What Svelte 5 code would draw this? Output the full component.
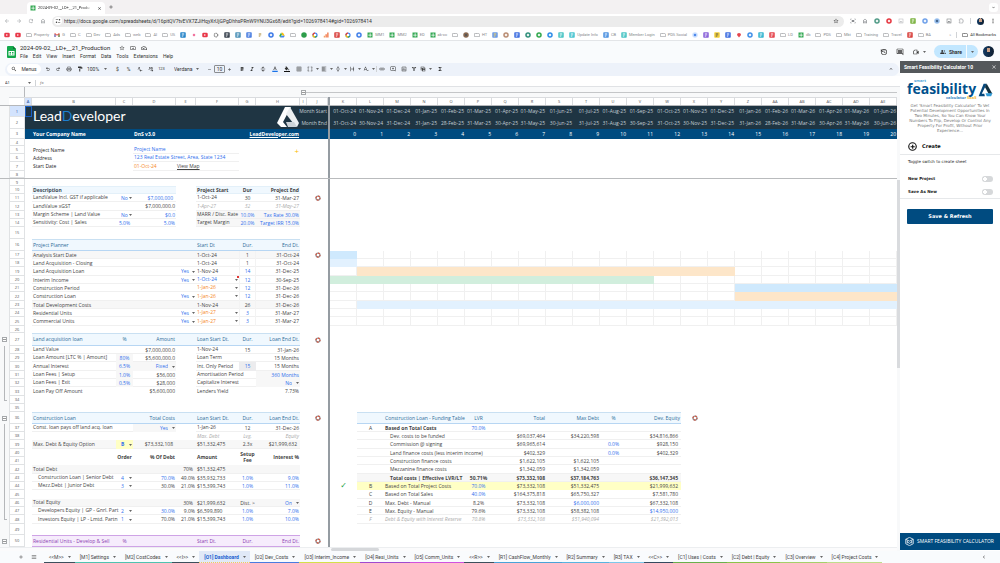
<script>
	const icons = {
		back: '<path d="M20 11H7.8l5.6-5.6L12 4l-8 8 8 8 1.4-1.4L7.8 13H20z"/>',
		forward: '<path d="M4 11h12.2l-5.6-5.6L12 4l8 8-8 8-1.4-1.4 5.6-5.6H4z"/>',
		reload: '<path d="M17.6 6.4A8 8 0 1 0 19.7 14h-2.1A6 6 0 1 1 16.2 7.8L13 11h7V4z"/>',
		home: '<path d="M12 5.5l5 4.5v9h-2v-6H9v6H7v-9zM12 3l-8 7v11h7v-6h2v6h7V10z"/>',
		tune: '<path d="M3 6h9v2H3zM18 4a3 3 0 1 0 0 6 3 3 0 0 0 0-6zM12 16h9v2h-9zM6 14a3 3 0 1 0 0 6 3 3 0 0 0 0-6z"/>',
		star: '<path d="M22 9.2l-7.2-.6L12 2 9.2 8.6 2 9.2l5.5 4.8L5.8 21 12 17.3l6.2 3.7-1.6-7zM12 15.4l-3.8 2.3 1-4.3L6 10.6l4.3-.4L12 6.1l1.7 4.1 4.3.4-3.3 2.8 1 4.3z"/>',
		folder: '<path d="M9.2 6l2 2H20v10H4V6zM10 4H4a2 2 0 0 0-2 2v12a2 2 0 0 0 2 2h16a2 2 0 0 0 2-2V8a2 2 0 0 0-2-2h-8z"/>',
		moveTo: '<path d="M9.2 6l2 2H20v10H4V6zM10 4H4a2 2 0 0 0-2 2v12a2 2 0 0 0 2 2h16a2 2 0 0 0 2-2V8a2 2 0 0 0-2-2h-8zM12 10l4 3-4 3v-2H8v-2h4z"/>',
		cloud: '<path d="M19.3 10A7.5 7.5 0 0 0 5.4 8 6 6 0 0 0 6 20h13a5 5 0 0 0 .3-10zM19 18H6a4 4 0 0 1-.4-8l1-.1.5-1a5.5 5.5 0 0 1 10.3 1.5l.3 1.5 1.5.1A3 3 0 0 1 19 18zM10 14.2l-2-2L6.6 13.6 10 17l6-6-1.4-1.4z"/>',
		search: '<path d="M15.5 14h-.8l-.3-.3A6.5 6.5 0 1 0 13.7 14.4l.3.3v.8l5 5 1.5-1.5zM9.5 14a4.5 4.5 0 1 1 0-9 4.5 4.5 0 0 1 0 9z"/>',
		undo: '<path d="M7 19v-2h7.1a3.9 3.9 0 0 0 0-7.5H7.8l2.6 2.6L9 13.5 4 8.5l5-5 1.4 1.4L7.8 7.5h6.3a5.9 5.9 0 0 1 0 11.5z"/>',
		redo: '<path d="M17 19v-2H9.9a3.9 3.9 0 0 1 0-7.5h6.3l-2.6 2.6 1.4 1.4 5-5-5-5-1.4 1.4 2.6 2.6H9.9a5.9 5.9 0 0 0 0 11.5z"/>',
		print: '<path d="M19 8h-1V3H6v5H5a3 3 0 0 0-3 3v6h4v4h12v-4h4v-6a3 3 0 0 0-3-3zM8 5h8v3H8zm8 14H8v-4h8zm4-4h-2v-2H6v2H4v-4l1-1h14l1 1z"/>',
		paint: '<path d="M18 4V3a1 1 0 0 0-1-1H5a1 1 0 0 0-1 1v4a1 1 0 0 0 1 1h12a1 1 0 0 0 1-1V6h1v4H9v11a1 1 0 0 0 1 1h2a1 1 0 0 0 1-1v-9h8V4z"/>',
		dec: '<path d="M3 12h2v2H3zM9 4a3 3 0 0 0-3 3v4a3 3 0 0 0 6 0V7a3 3 0 0 0-3-3zm1 7a1 1 0 0 1-2 0V7a1 1 0 0 1 2 0zM21 17h-7l2-2-1.4-1.4L10 18l4.6 4.4L16 21l-2-2h7z"/>',
		inc: '<path d="M1 12h2v2H1zM7 4a3 3 0 0 0-3 3v4a3 3 0 0 0 6 0V7a3 3 0 0 0-3-3zm1 7a1 1 0 0 1-2 0V7a1 1 0 0 1 2 0zM15 4a3 3 0 0 0-3 3v4a3 3 0 0 0 6 0V7a3 3 0 0 0-3-3zm1 7a1 1 0 0 1-2 0V7a1 1 0 0 1 2 0zM10 17h7l-2-2 1.4-1.4L21 18l-4.6 4.4L15 21l2-2h-7z"/>',
		bold: '<path d="M15.6 11.8A4 4 0 0 0 13.5 4H7v16h7.2a4.4 4.4 0 0 0 1.4-8.2zM10 6.5h3a1.5 1.5 0 0 1 0 3.5h-3zm3.5 11H10V13.5h3.5a1.5 1.5 0 0 1 0 4z"/>',
		italic: '<path d="M10 4v3h2.2l-3.4 10H6v3h8v-3h-2.2l3.4-10H18V4z"/>',
		strike: '<path d="M3 11h18v2H3zM12 3c3 0 5 2 5 4h-3c0-1-1-1.5-2-1.5-3 0-3 3 0 3.5H8C6 6 8 3 12 3zM7 16h3c0 1.5 1 2.5 2.5 2.5 2 0 2.5-1.5 1.5-3h3c1 3-1 5.5-4.5 5.5C9 21 7 19 7 16z"/>',
		color: '<path d="M11 2L5.5 16h2.2l1.1-3h6.3l1.1 3h2.3L13 2zM9.6 11L12 4.7 14.4 11z"/><path d="M1 19h22v5H1z" fill="#1a73e8"/>',
		fill: '<path d="M16.6 9L7.6 0 6.2 1.4l2.4 2.4-5.2 5.2a1.5 1.5 0 0 0 0 2.1l5.5 5.5a1.5 1.5 0 0 0 2.1 0L16.6 11a1.5 1.5 0 0 0 0-2zM19 11.5s-2 2.2-2 3.5a2 2 0 0 0 4 0c0-1.3-2-3.5-2-3.5z"/><path d="M0 20h24v4H0z" fill="#111"/>',
		border: '<path d="M3 3v18h18V3zm8 16H5v-6h6zm0-8H5V5h6zm8 8h-6v-6h6zm0-8h-6V5h6z"/>',
		merge: '<path d="M3 3h6v2H5v4H3zM21 3h-6v2h4v4h2zM3 21h6v-2H5v-4H3zM21 21h-6v-2h4v-4h2zM3 11h5v2H3zM16 11h5v2h-5z"/>',
		align: '<path d="M3 3h18v2H3zM3 7h12v2H3zM3 11h18v2H3zM3 15h12v2H3zM3 19h18v2H3z"/>',
		valign: '<path d="M8 19h3v4h2v-4h3l-4-4zM16 5h-3V1h-2v4H8l4 4zM4 11v2h16v-2z"/>',
		wrap: '<path d="M4 3h2v18H4zM18 3h2v6h-2zM18 15h2v6h-2zM8 11h8V8l5 4-5 4v-3H8z"/>',
		rotate: '<path d="M3 18l6-15h2l6 15h-2.2l-1.5-4H6.7l-1.5 4zM7.4 12h5.2L10 5zM16 20l5-5v5z"/>',
		link: '<path d="M3.9 12A3.1 3.1 0 0 1 7 8.9h4V7H7a5 5 0 0 0 0 10h4v-1.9H7A3.1 3.1 0 0 1 3.9 12zM8 13h8v-2H8zM17 7h-4v1.9h4a3.1 3.1 0 0 1 0 6.2h-4V17h4a5 5 0 0 0 0-10z"/>',
		addComment: '<path d="M22 4a2 2 0 0 0-2-2H4a2 2 0 0 0-2 2v12a2 2 0 0 0 2 2h14l4 4zM20 17l-1-1H4V4h16zM11 14h2v-3h3V9h-3V6h-2v3H8v2h3z"/>',
		comment: '<path d="M22 4a2 2 0 0 0-2-2H4a2 2 0 0 0-2 2v12a2 2 0 0 0 2 2h14l4 4zM20 17l-1-1H4V4h16zM6 12h12v2H6zM6 9h12v2H6zM6 6h12v2H6z"/>',
		chart: '<path d="M19 3H5a2 2 0 0 0-2 2v14a2 2 0 0 0 2 2h14a2 2 0 0 0 2-2V5a2 2 0 0 0-2-2zm0 16H5V5h14zM7 10h2v7H7zM11 7h2v10h-2zM15 13h2v4h-2z"/>',
		filter: '<path d="M3 4h18l-7 9v7h-4v-7zm4.5 2L12 12l4.5-6z"/>',
		views: '<path d="M3 3h14v4h4v14H8v-4H3zm2 2v3h10V5zm0 5v5h3v-5zm6 2h8v-2h-8zm0 3v4h8v-4z"/>',
		sigma: '<path d="M18 4H6v2l6.5 6L6 18v2h12v-3h-7l5-5-5-5h7z"/>',
		up: '<path d="M12 8l-6 6 1.4 1.4L12 10.8l4.6 4.6L18 14z"/>',
		down: '<path d="M7.4 8.6L12 13.2l4.6-4.6L18 10l-6 6-6-6z"/>',
		left: '<path d="M15.4 7.4L14 6l-6 6 6 6 1.4-1.4L10.8 12z"/>',
		close: '<path d="M19 6.4L17.6 5 12 10.6 6.4 5 5 6.4 10.6 12 5 17.6 6.4 19 12 13.4 17.6 19 19 17.6 13.4 12z"/>',
		plus: '<path d="M19 13h-6v6h-2v-6H5v-2h6V5h2v6h6z"/>',
		minus: '<path d="M5 11h14v2H5z"/>',
		menu: '<path d="M3 18h18v-2H3zM3 13h18v-2H3zM3 6v2h18V6z"/>',
		history: '<path d="M12 3a9 9 0 0 0-7.5 4V4h-2v7h7V9H5.8A7 7 0 1 1 5 12H3a9 9 0 1 0 9-9zM11 7v6l5 3 1-1.6-4-2.4V7z"/>',
		video: '<path d="M8 5L4 9v10h12v-4l4 3V8l-4 3V5zm1 2h5v10H6V10z"/>',
		people: '<path d="M9 12a4 4 0 1 0 0-8 4 4 0 0 0 0 8zM1 20v-3c0-3 5-4 8-4s8 1 8 4v3zM15 4a4 4 0 0 1 0 8c2-2 2-6 0-8zM18 14c2 .5 5 1 5 3v3h-4v-3z"/>',
		puzzle: '<path d="M10 4a2 2 0 0 1 4 0v1h5v5h1a2 2 0 0 1 0 4h-1v6H5v-5h1a2 2 0 0 0 0-5H5V5h5z" fill="none" stroke="currentColor" stroke-width="2"/>',
		dots: '<path d="M10 3h4v4h-4zM10 10h4v4h-4zM10 17h4v4h-4z"/>',
		frame: '<path d="M2 3h5v2H4v3H2zM22 3h-5v2h3v3h2zM2 21h5v-2H4v-3H2zM22 21h-5v-2h3v-3h2zM7 8h10v8H7z"/>',
		image: '<path d="M3 3h18v18H3zm2 2v14h14V5zm1 12l4-5 3 3 2-3 3 5z"/>',
		sheet: '<path d="M2 2h20v20H2z" fill="#34a853"/><path d="M11 5h3v6h5v3h-5v5h-3v-5H5v-3h6z" fill="#fff"/>',
		yt: '<rect x="1" y="3" width="22" height="18" rx="5" fill="#e8394a"/><path d="M9 8l7 4-7 4z" fill="#fff"/>',
		gmail: '<path d="M2 5v15h4V10l6 5 6-5v10h4V5h-3l-7 6-7-6z" fill="#ea4335"/><path d="M2 9v11h4V10z" fill="#4285f4"/><path d="M22 9v11h-4V10z" fill="#34a853"/>',
		drive: '<path d="M8 3h8l7 12h-8z" fill="#fbbc04"/><path d="M8 3l4 7-7 12-4-7z" fill="#34a853"/><path d="M9 15h14l-4 7H5z" fill="#4285f4"/>',
		google: '<circle cx="12" cy="12" r="8" fill="none" stroke="#4285f4" stroke-width="5"/><path d="M4 12a8 8 0 0 1 8-8" fill="none" stroke="#ea4335" stroke-width="5"/><path d="M4 12a8 8 0 0 0 8 8" fill="none" stroke="#fbbc04" stroke-width="5"/><path d="M12 20a8 8 0 0 0 7-4" fill="none" stroke="#34a853" stroke-width="5"/>',
		bars: '<path d="M3 15h5v7H3z" fill="#f4a261"/><path d="M10 9h5v13h-5zM17 2h5v20h-5z" fill="#ef6c3a"/>',
		pin: '<path d="M12 22L4 12a8 8 0 1 1 16 0z" fill="#e5454d"/>',
		gear: '<circle cx="12" cy="12" r="7" fill="none" stroke="#888" stroke-width="5" stroke-dasharray="5 2"/>',
	};

	const square = (bg, mark = '#fff') =>
		`<rect x="1" y="1" width="22" height="22" rx="3" fill="${bg}"/><path d="M7 6h10v3H7zM7 11h10v2H7zM7 15h6v3H7z" fill="${mark}"/>`;
	const round = (bg, mark = '#fff') =>
		`<circle cx="12" cy="12" r="11" fill="${bg}"/><path d="M12 6l6 6-6 6-6-6z" fill="${mark}"/>`;

	const bookmarks = [
		[icons.yt], [icons.yt], ['folder', 'Property'], [icons.gmail, 'G'], ['folder', 'C'], ['folder', 'Dev'],
		['folder', 'Ads'], ['folder', 'web'], ['folder', 'AI'], ['folder', 'US'], [square('#2684c8')],
		[round('#fff', '#f06292')], [icons.yt], [icons.gear], [square('#39424e')], [square('#4f93b8')],
		[square('#4c7fe0')], [square('#fff', '#a8842c')], [round('#3b78e7')], [icons.drive], ['folder'],
		[round('#2e9e4b', '#2e9e4b')], [icons.google], [icons.bars], [square('#d9433f')], [icons.google],
		[round('#3f7ee8')], [icons.sheet, 'MM1'], [icons.sheet, 'MM2'], [icons.sheet, 'ED'],
		[icons.sheet, 'ak-cc'], ['folder'], [round('#8a6a52', '#555')], ['folder', 'HT'], [square('#6c9be8', '#fbd75b')],
		[round('#b98c72')], [square('#3f6fe0')], [round('#2f8f7a')], [round('#2fa74b')], [round('#2b8be8')],
		[square('#4cc5c5')], [square('#4cc5d0'), 'Update Info'], [square('#4f93e0'), 'CB'],
		[square('#4cc5c5'), 'Member Login'], ['folder', 'PDS Social'], [round('#cfe2ff', '#3f7ee8')],
		[square('#8a63d9')], [square('#f3cf3a', '#555')], [square('#3f6fe0')], [icons.pin], [round('#3f8fe8')],
		[square('#39b6d0')], [square('#e5454d')], ['folder', 'LD'], [icons.sheet, 'db'], ['folder', 'PDS'],
		['folder', 'Mkt'], ['folder', 'Training'], ['folder', 'Travel'], [square('#d9433f')], ['folder', 'BA'],
	];

	const extensions = [
		['frame', '#8a8d91'], ['home', '#8a8d91'], ['', round('#4f9a86')], ['', round('#e5343d')], ['image', '#b3b5b8'],
		['', square('#7cb342')], ['', round('#6ea0ea')], ['', round('#9cc2f0', '#3b5a80')], ['image', '#6a6d70'], ['puzzle', '#8a8d91'],
	];

	const menus = ['File', 'Edit', 'View', 'Insert', 'Format', 'Data', 'Tools', 'Extensions', 'Help'];

	// [icon, slot width, has caret]
	const historyTools = [['undo', 11], ['redo', 10], ['print', 11], ['paint', 11]];
	const formatTools = [
		['bold', 11], ['italic', 10], ['strike', 11], ['color', 13], ['fill', 12], ['border', 12],
		['merge', 15, true], ['align', 14, true], ['valign', 14, true], ['wrap', 14, true], ['rotate', 14, true],
	];
	const insertTools = [['link', 10], ['addComment', 11], ['chart', 11], ['filter', 10], ['views', 14, true], ['sigma', 14]];

	const sheets = [
		['<<M>>', '#3c4f5c'], ['[M1] Settings', '#4fc3b0'], ['[M2] CostCodes', '#4fc3b0'], ['<<I>>', '#3c4f5c'],
		['[O1] Dashboard', '#f4c95a'], ['[O2] Dev_Costs', '#4a7be0'], ['[O3] Interim_Income', '#d4e04a'],
		['[O4] Resi_Units', '#a04ad0'], ['[O5] Comm_Units', '#d052e0'], ['<<R>>', '#3c4f5c'],
		['[R1] CashFlow_Monthly', '#4aa3d8'], ['[R2] Summary', '#58b4e0'], ['[R3] TAX', '#7cc8ea'], ['<<C>>', '#34495e'],
		['[C1] Uses | Costs', '#6ab04c'], ['[C2] Debt | Equity', '#8bc34a'], ['[C3] Overview', '#a5d06a'],
		['[C4] Project Costs', '#bfdd8c'],
	];

	const MONTHS = 21;
	const leftCols = ['A', 'B', 'C', 'D', 'E', 'F', 'G', 'H', 'I', 'J'];
	const letters = [...'KLMNOPQRSTUVWXYZ', 'AA', 'AB', 'AC', 'AD', 'AE'];

	// grid lines: 1 is the gutter, 2 the row number, 13 the freeze bar
	const colIndex = name => {
		const i = leftCols.indexOf(name);
		return i >= 0 ? i + 3 : letters.indexOf(name) + 14;
	};
	const span = range => {
		const [a, b = a] = range.split(':');
		return `grid-column: ${colIndex(a)} / ${colIndex(b) + 1}`;
	};

	const names = ['Jan', 'Feb', 'Mar', 'Apr', 'May', 'Jun', 'Jul', 'Aug', 'Sep', 'Oct', 'Nov', 'Dec'];
	const monthDate = (i, end) => {
		const d = new Date(2024, 9 + i + (end ? 1 : 0), end ? 0 : 1);
		return `${String(d.getDate()).padStart(2, '0')}-${names[d.getMonth()]}-${String(d.getFullYear()).slice(2)}`;
	};
	const months = end => Array.from({ length: MONTHS }, (_, i) => [letters[i], monthDate(i, end), 'r pale']);

	const heights = [
		11, 12, 10, 7, 8, 8, 9, 8, 7, 8, 8, 9, 8, 8, 12, 12, 8, 8, 9, 8, 8, 9, 8, 8, 9,
		7, 13, 8, 8, 9, 8, 8, 9, 8, 8, 12, 8, 8, 9, 8, 8, 9, 8, 8, 9, 8, 8, 9, 11, 12,
	];

	const plan = (name, use, start, dur, end, look = '', bars = []) => [
		['B:H', '', look],
		['B:D', name],
		...(use ? [['E', use, 'pick blue']] : []),
		['F', start, look.includes('pk') ? 'pick ' + look : look.includes('blue') ? 'blue' : ''],
		['G', dur, +dur > 1 && !look.includes('grey') ? 'c blue vline' : 'c vline'],
		['H', end, 'r'],
		...letters.map(l => [l, '', 'slot']),
		...bars.map(([range, color]) => [range, '', 'bar ' + color]),
	];

	const fund = (key, label, lvr, total, debt, pct, equity, look = 'line') => [
		['L:W', '', look],
		['L', key, 'c'],
		['M:O', label, key ? '' : 'sub'],
		['P', lvr, look.includes('dim') || look.includes('strong') || look.includes('plainlvr') ? 'c' : 'c blue'],
		['Q:R', total, 'r'],
		['S:T', debt, debt === '$6,000,000' ? 'r blue' : 'r'],
		['U', pct, 'c blue'],
		['V:W', equity, equity === '$14,950,000' ? 'r far blue' : 'r far'],
	];

	const data = {
		1: { look: 'navy', cells: [['A', '', 'active'], ['B:E', '', 'brand'], ['H', '', 'emblem'], ['I:J', 'Month Start', 'r pale'], ...months(false)] },
		2: { look: 'navy', cells: [['I:J', 'Month End', 'r pale'], ...months(true)] },
		3: { look: 'royal', cells: [['B:C', 'Your Company Name', 'b'], ['D:E', 'DnS v3.0', 'b'], ['G:H', 'LeadDeveloper.com', 'r b link'], ...letters.map((l, i) => [l, String(i), 'r'])] },
		5: { cells: [['B', 'Project Name', 'ink'], ['D:F', 'Project Name', 'blue line'], ['H', '+', 'r gold']] },
		6: { cells: [['B', 'Address', 'ink'], ['D:F', '123 Real Estate Street, Area, State 1234', 'blue line']] },
		7: { cells: [['B', 'Start Date', 'ink'], ['D:F', '', 'line'], ['D', '01-Oct-24', 'orange'], ['E:F', 'View Map', 'under']] },
		8: { look: 'frozen', cells: [] },
		10: { cells: [['B:D', 'Description', 'head soft'], ['F:H', '', 'head soft'], ['F', 'Project Start', 'b'], ['G', 'Dur', 'c b'], ['H', 'Project End', 'r b']] },
		11: { cells: [['B:D', 'LandValue Incl. GST if applicable', 'line'], ['C', 'No', 'pick blue c'], ['D', '$7,000,000', 'r blue inset'], ['F:H', '1-Oct-24', 'line'], ['G', '30', 'c'], ['H', '31-Mar-27', 'r'], ['J', '', 'buoy']] },
		12: { cells: [['B:D', 'LandValue xGST', 'line'], ['D', '$7,000,000.0', 'r'], ['F:H', '1-Apr-27', 'line dim'], ['G', '32', 'c dim'], ['H', '31-May-27', 'r dim']] },
		13: { cells: [['B:D', 'Margin Scheme | Land Value', 'line'], ['C', 'No', 'pick blue c'], ['D', '$0.0', 'r blue'], ['F:H', 'MARR / Disc. Rate', 'line grey'], ['G', '10.0%', 'c blue'], ['H', 'Tax Rate 30.0%', 'r blue']] },
		14: { cells: [['B:D', 'Sensitivity: Cost | Sales', 'line'], ['C', '5.0%', 'c blue'], ['D', '5.0%', 'r blue'], ['F:H', 'Target Margin', 'line grey'], ['G', '20.0%', 'c blue'], ['H', 'Target IRR 15.0%', 'r blue']] },
		16: { cells: [['B:H', 'Project Planner', 'head'], ['F', 'Start Dt', 'teal'], ['G', 'Dur.', 'c teal'], ['H', 'End Dt.', 'r teal']] },
		17: { cells: [...plan('Analysis Start Date', '', '1-Oct-24', '1', '31-Oct-24', 'line grey', [['K', 'sky']]), ['J', '', 'buoy']] },
		18: { cells: plan('Land Acquisition - Closing', '', '1-Oct-24', '1', '31-Oct-24', 'line', [['K', 'ice']]) },
		19: { cells: plan('Land Acquisition Loan', 'Yes', '1-Nov-24', '14', '31-Dec-25', 'line', [['L:Y', 'peach']]) },
		20: { cells: [...plan('Interim Income', 'Yes', '1-Oct-24', '12', '30-Sep-25', 'line pk blue', [['K:V', 'mint']]), ['F', '', 'note']] },
		21: { cells: plan('Construction Period', '', '1-Jan-26', '12', '31-Dec-26', 'line pk orange', [['Z:AE', 'sky']]) },
		22: { cells: plan('Construction Loan', 'Yes', '1-Jan-26', '12', '31-Dec-26', 'line pk orange', [['Z:AE', 'peach']]) },
		23: { cells: plan('Total Development Costs', '', '1-Nov-24', '26', '31-Dec-26', 'line grey', [['L:AE', 'ice']]) },
		24: { cells: plan('Residential Units', 'Yes', '1-Jan-27', '3', '31-Mar-27', 'line pk orange') },
		25: { cells: plan('Commercial Units', 'Yes', '1-Jan-27', '3', '31-Mar-27', 'line pk orange') },
		27: { group: 'start', cells: [['B:H', 'Land acquisition loan', 'head'], ['C', '%', 'c teal'], ['D', 'Amount', 'r teal'], ['F', 'Loan Start Dt.', 'teal'], ['G', 'Dur.', 'c teal'], ['H', 'Loan End Dt.', 'r teal'], ['J', '', 'buoy']] },
		28: { group: 'mid', cells: [['B:D', 'Land Value', 'line'], ['D', '$7,000,000.0', 'r'], ['F:H', '1-Nov-24', 'line'], ['G', '15', 'c'], ['H', '31-Jan-26', 'r']] },
		29: { group: 'mid', cells: [['B:D', 'Loan Amount [LTC % | Amount]', 'line'], ['C', '80%', 'c blue grey'], ['D', '$5,600,000.0', 'r'], ['F:H', 'Loan Term', 'line'], ['H', '15 Months', 'r']] },
		30: { group: 'mid', cells: [['B:D', 'Annual Interest', 'line'], ['C', '6.5%', 'c blue grey'], ['D', 'Fixed', 'pick blue r grey'], ['F:H', 'Int. Only Period', 'line'], ['G', '15', 'c blue shade'], ['H', '15 Months', 'r']] },
		31: { group: 'mid', cells: [['B:D', 'Loan Fees | Setup', 'line'], ['C', '1.0%', 'c blue grey'], ['D', '$56,000', 'r'], ['F:H', 'Amortisation Period', 'line'], ['H', '360 Months', 'r blue grey']] },
		32: { group: 'mid', cells: [['B:D', 'Loan Fees | Exit', 'line'], ['C', '0.5%', 'c blue grey'], ['D', '$28,000', 'r'], ['F:H', 'Capitalize Interest', 'line'], ['H', 'No', 'pick blue r grey']] },
		33: { group: 'mid', cells: [['B:D', 'Loan Pay Off Amount', ''], ['D', '$5,600,000', 'r'], ['F:H', 'Lenders Yield', ''], ['H', '7.73%', 'r']] },
		34: { group: 'end', cells: [] },
		36: { group: 'start', cells: [['B:H', 'Construction Loan', 'head'], ['C:D', 'Total Costs', 'r teal'], ['F', 'Loan Start Dt.', 'teal'], ['G', 'Dur.', 'c teal'], ['H', 'Loan End Dt.', 'r teal'], ['J', '', 'buoy'],
			['L:W', '', 'head'], ['M:O', 'Construction Loan - Funding Table', 'teal'], ['P', 'LVR', 'c teal'], ['Q:R', 'Total', 'r teal'], ['S:T', 'Max Debt', 'r teal'], ['U', '%', 'c teal'], ['V:W', 'Dev. Equity', 'r teal'], ['X', '', 'buoy']] },
		37: { group: 'mid', cells: [['B:D', 'Const. loan pays off land acq. loan', 'line'], ['D', 'Yes', 'pick blue r grey'], ['F:H', '1-Jan-26', 'line'], ['G', '12', 'c'], ['H', '31-Dec-26', 'r'],
			...fund('A', 'Based on Total Costs', '70.0%', '', '', '', '', 'line boldname')] },
		38: { group: 'mid', cells: [['F', 'Max. Debt', 'dim'], ['G', 'Lvg.', 'c dim'], ['H', 'Equity', 'r dim'], ...fund('', 'Dev. costs to be funded', '', '$69,037,464', '$34,220,598', '', '$34,816,866')] },
		39: { group: 'mid', cells: [['B:H', 'Max. Debt & Equity Option', 'line grey'], ['C', 'B', 'pick blue c yellow b'], ['D', '$73,332,108', 'r inset'], ['F', '$51,332,475', ''], ['G', '2.3x', 'c'], ['H', '$21,999,632', 'r inset'],
			...fund('', 'Commission @ signing', '', '$69,965,614', '', '0.0%', '$928,150')] },
		40: { group: 'mid', cells: [['C', 'Order', 'c b merged'], ['D', '% Of Debt', 'r b merged'], ['F', 'Amount', 'b merged'], ['G', 'Setup Fee', 'c b merged two'], ['H', 'Interest %', 'r b merged'],
			...fund('', 'Land finance costs (less interim income)', '', '$402,329', '', '0.0%', '$402,329')] },
		41: { group: 'mid', cells: fund('', 'Construction finance costs', '', '$1,622,105', '$1,622,105', '', '') },
		42: { group: 'mid', cells: [['B:H', 'Total Debt', 'line grey'], ['E', '70%', 'r inset'], ['F', '$51,332,475'], ...fund('', 'Mezzanine finance costs', '', '$1,342,059', '$1,342,059', '', '')] },
		43: { group: 'mid', cells: [['B:H', 'Construction Loan | Senior Debt', 'line sub'], ['C', '4', 'pick blue c'], ['D', '70.0%', 'r blue'], ['E', '49.0%', 'r'], ['F', '$35,932,733'], ['G', '1.0%', 'c blue'], ['H', '9.0%', 'r blue'],
			...fund('', 'Total costs | Effective LVR/LT', '50.71%', '$73,332,108', '$37,184,763', '', '$36,147,345', 'line grey strong')] },
		44: { group: 'mid', cells: [['B:H', 'Mezz.Debt | Junior Debt', 'line sub'], ['C', '3', 'pick blue c'], ['D', '30.0%', 'r'], ['E', '21.0%', 'r'], ['F', '$15,399,743'], ['G', '1.0%', 'c blue'], ['H', '11.0%', 'r blue'], ['K', '✓', 'c tick'],
			...fund('B', 'Based on Total Project Costs', '70.0%', '$73,332,108', '$51,332,475', '', '$21,999,632', 'yellow')] },
		45: { group: 'mid', cells: fund('C', 'Based on Total Sales', '40.0%', '$164,375,818', '$65,750,327', '', '$7,581,780') },
		46: { group: 'mid', cells: [['B:H', 'Total Equity', 'line grey'], ['E', '30%', 'r inset'], ['F', '$21,999,632'], ['G', 'Dist. >', 'c'], ['H', 'On', 'pick blue r'],
			...fund('D', 'Max. Debt - Manual', '8.2%', '$73,332,108', '$6,000,000', '', '$67,332,108', 'line plainlvr')] },
		47: { group: 'mid', cells: [['B:H', 'Developers Equity | GP - Gnrl. Part', 'line sub'], ['C', '2', 'pick blue c'], ['D', '30.0%', 'r blue'], ['E', '9.0%', 'r'], ['F', '$6,599,890'], ['G', '1.0%', 'c blue'], ['H', '7.0%', 'r blue'],
			...fund('E', 'Max. Equity - Manual', '79.6%', '$73,332,108', '$58,382,108', '', '$14,950,000', 'line plainlvr')] },
		48: { group: 'end', cells: [['B:H', 'Investors Equity | LP - Lmtd. Partn', 'line sub'], ['C', '1', 'pick blue c'], ['D', '70.0%', 'r'], ['E', '21.0%', 'r'], ['F', '$15,399,743'], ['G', '1.0%', 'c blue'], ['H', '10.0%', 'r blue'],
			...fund('F', 'Debt & Equity with Interest Reserve', '70.8%', '$73,332,108', '$51,940,094', '', '$21,392,013', 'line dim')] },
		50: { group: 'start', cells: [['B:H', 'Residential Units - Develop & Sell', 'head violet'], ['C', '%', 'c plum'], ['F', 'Start Dt.', 'plum'], ['G', 'Dur.', 'c plum'], ['H', 'End Dt.', 'r plum'], ['J', '', 'buoy']] },
	};

	// the whole funding row takes the look of its band
	const rowLook = (cells, i) => {
		const band = cells.find(c => c[0] === 'L:W');
		if (!band || colIndex(cells[i][0].split(':')[0]) < 15) return '';
		if (cells[i] === band) return '';
		if (band[2].includes('strong')) return 'b';
		if (band[2].includes('dim')) return 'dim';
		if (band[2].includes('boldname') && cells[i][0] === 'M:O') return 'b';
		return '';
	};
	const has = (look, name) => (look || '').split(' ').includes(name);
</script>

{#snippet icon(name, size = 6)}
	<svg class="icon s{size}" viewBox="0 0 24 24" aria-hidden="true">{@html icons[name]}</svg>
{/snippet}

{#snippet caret()}
	<svg class="caret" viewBox="0 0 6 4" aria-hidden="true"><path d="M0 0h6L3 4z" /></svg>
{/snippet}

{#snippet emblem()}
	<svg class="mark" viewBox="0 0 24 22" aria-hidden="true">
		<path d="M9 1h6L7 16l4 5H5L1 17z" fill="#fff" />
		<path d="M14 1l9 16-2 4-4-4L10 8z" fill="#eceff1" />
		<path d="M10 16h8l3 5H12z" fill="#cdd3d8" />
	</svg>
{/snippet}

<div class="page">
	<div class="tabstrip">
		<div class="browser-tab">
			{@render icon('sheet')}
			<span>2024-09-02__LD+__21_Produ</span>
			<button aria-label="Close tab">{@render icon('close', 5)}</button>
		</div>
		<button class="new-tab" aria-label="New tab">{@render icon('plus')}</button>
		<button class="tab-search" aria-label="Search tabs">{@render icon('down', 5)}</button>
	</div>

	<div class="urlbar">
		<div class="nav">
			<button aria-label="Back">{@render icon('back')}</button>
			<button aria-label="Forward">{@render icon('forward')}</button>
			<button aria-label="Reload">{@render icon('reload')}</button>
			<button aria-label="Home">{@render icon('home')}</button>
		</div>
		<div class="address">
			<span class="site">{@render icon('tune')}</span>
			<input aria-label="Address" value="https://docs.google.com/spreadsheets/d/16pitQV7tvEVX7ZJiHqyXrUjGPgDhhsPRnW9YNU3Gx68/edit?gid=1026978414#gid=1026978414" />
			{@render icon('star')}
		</div>
		<div class="extensions">
			{#each extensions as [name, paint]}
				{#if name}
					<svg class="icon s6" viewBox="0 0 24 24" style="color: {paint}">{@html icons[name]}</svg>
				{:else}
					<svg class="icon s6" viewBox="0 0 24 24">{@html paint}</svg>
				{/if}
			{/each}
			<span class="rule"></span>
			<span class="face small"></span>
			{@render icon('dots')}
		</div>
	</div>

	<nav class="bookmarks">
		{#each bookmarks as [mark, label]}
			<a href="#top" aria-label={label || 'Bookmark'}>
				<svg class="icon s6" viewBox="0 0 24 24">{@html mark === 'folder' ? icons.folder : mark}</svg>
				{#if label}<span>{label}</span>{/if}
			</a>
		{/each}
		<span class="more">»</span>
		<span class="rule"></span>
		<a href="#top" class="all">{@render icon('folder')}<span>All Bookmarks</span></a>
	</nav>

	<header>
		<svg class="doc-logo" viewBox="0 0 18 24" aria-hidden="true">
			<path d="M2 0h10l6 6v16a2 2 0 0 1-2 2H2a2 2 0 0 1-2-2V2a2 2 0 0 1 2-2z" fill="#12a84b" />
			<path d="M12 0l6 6h-6z" fill="#0b7a35" />
			<path d="M3 10h12v9H3zm2 2v2h3v-2zm5 0v2h3v-2zm-5 3v2h3v-2zm5 0v2h3v-2z" fill="#fff" fill-rule="evenodd" />
		</svg>
		<div class="doc">
			<div class="doc-title">
				<h1>2024-09-02__LD+__21_Production</h1>
				{@render icon('star')}
				{@render icon('moveTo')}
				{@render icon('cloud')}
			</div>
			<div class="menus">
				{#each menus as menu}<button>{menu}</button>{/each}
			</div>
		</div>
		<div class="actions">
			<button aria-label="History">{@render icon('history', 8)}</button>
			<button aria-label="Comments">{@render icon('comment', 8)}</button>
			<button aria-label="Call" class="call">{@render icon('video', 8)}{@render caret()}</button>
			<div class="share">
				<button>{@render icon('people')}Share</button>
				<button aria-label="Share options" class="share-more">{@render caret()}</button>
			</div>
			<span class="face"></span>
		</div>
	</header>

	<div class="workspace">
		<main>
			<div class="toolbar">
				<button class="menus-search">{@render icon('search')}Menus</button>
				{#each historyTools as [name, w]}
					<button aria-label={name} style="width: {w}px">{@render icon(name)}</button>
				{/each}
				<label class="drop zoom"><select aria-label="Zoom"><option>100%</option></select>{@render caret()}</label>
				<button class="num">$</button>
				<button class="num">%</button>
				<button class="num" aria-label="Decrease decimals">{@render icon('dec')}</button>
				<button class="num" aria-label="Increase decimals">{@render icon('inc')}</button>
				<button class="num tiny">123</button>
				<label class="drop font"><select aria-label="Font"><option>Verdana</option></select>{@render caret()}</label>
				<button class="step" aria-label="Smaller">{@render icon('minus', 5)}</button>
				<input class="size" aria-label="Font size" value="10" />
				<button class="step" aria-label="Larger">{@render icon('plus', 5)}</button>
				{#each formatTools as [name, w, more]}
					<button aria-label={name} style="width: {w}px">{@render icon(name)}{#if more}{@render caret()}{/if}</button>
				{/each}
				<span class="rule"></span>
				{#each insertTools as [name, w, more]}
					<button aria-label={name} style="width: {w}px">{@render icon(name)}{#if more}{@render caret()}{/if}</button>
				{/each}
				<button class="collapse" aria-label="Hide the menus">{@render icon('up')}</button>
			</div>

			<div class="formula">
				<input class="name-box" aria-label="Name box" value="A1" />
				{@render caret()}
				<span class="rule"></span>
				<label for="fx"><i>fx</i></label>
				<input id="fx" class="fx" />
			</div>

			<div class="sheet">
				<div class="scroller">
					<div class="col-group">
						<span class="edge"></span>
						<button class="fold" aria-label="Collapse columns"></button>
						<span class="bracket"></span>
					</div>
					<table>
						<thead>
							<tr class="letters">
								<th class="corner"></th>
								<th class="num-head"></th>
								{#each leftCols as l}<th class:picked={l === 'A'}>{l}</th>{/each}
								<th class="freeze"></th>
								{#each letters as l}<th>{l}</th>{/each}
							</tr>
						</thead>
						<tbody>
							{#each heights as h, i}
								{@const row = data[i + 1] || { cells: [] }}
								<tr class={row.look} style="height: {h}px">
									<td class="gutter {row.group || ''}">
										{#if row.group === 'start'}<button class="fold" aria-label="Collapse rows"></button>{/if}
									</td>
									<th class="rownum" class:picked={i === 0}>{i + 1}</th>
									{#each row.cells as [range, text, look], k}
										<td class="{look || ''} {rowLook(row.cells, k)}" style={span(range)}>
											{#if has(look, 'pick')}
												<select aria-label="Row {i + 1}"><option>{text}</option></select>{@render caret()}
											{:else if has(look, 'brand')}
												<span class="wordmark">Lead<b>D</b>eveloper</span>
											{:else if has(look, 'emblem')}
												{@render emblem()}
											{:else if has(look, 'buoy')}
												<svg class="icon s6" viewBox="0 0 24 24">
													<circle cx="12" cy="12" r="8" fill="none" stroke="#8a8f94" stroke-width="5" />
													<circle cx="12" cy="12" r="8" fill="none" stroke="#dd5b45" stroke-width="5" stroke-dasharray="7 5.56" stroke-dashoffset="3.5" />
												</svg>
											{:else if has(look, 'link') || has(look, 'under')}
												<a href="#top">{text}</a>
											{:else if text}
												<span>{text}</span>
											{/if}
										</td>
									{/each}
									<td class="freeze"></td>
								</tr>
							{/each}
						</tbody>
					</table>
					<div class="hbar"><span></span></div>
				</div>
				<div class="vbar"><span></span></div>
			</div>
		</main>

		<aside>
			<div class="side-head">
				<span>Smart Feasibility Calculator 10</span>
				<button aria-label="Close">{@render icon('close')}</button>
			</div>
			<div class="logo">
				<span class="tag">smart</span>
				<strong>feasibility</strong>
				<svg viewBox="0 0 24 22" aria-hidden="true">
					<path d="M9 1h5L6 17h4l1 4H1z" fill="#06487c" />
					<path d="M14 1l9 16h-6L11 6z" fill="#12303f" />
					<path d="M12 16h11l-2 5H14z" fill="#2f9bd8" />
				</svg>
				<span class="tag low">calculator <em>SaaS</em></span>
			</div>
			<p>Get 'Smart Feasibility Calculator' To Vet Potential Development Opportunities In Two Minutes, So You Can Know Your Numbers To Flip, Develop Or Control Any Property For Profit, Without Prior Experience...</p>
			<h2>
				<svg viewBox="0 0 24 24" aria-hidden="true"><circle cx="12" cy="12" r="10" fill="none" stroke="#111" stroke-width="3" /><path d="M11 7h3v4h4v3h-4v4h-3v-4H7v-3h4z" fill="#111" /></svg>
				Create
			</h2>
			<div class="options">
				<span>Toggle switch to create sheet</span>
				<label>New Project <input type="checkbox" /></label>
				<label>Save As New <input type="checkbox" /></label>
			</div>
			<button class="save">Save &amp; Refresh</button>
			<div class="side-foot">
				<svg viewBox="0 0 24 24" aria-hidden="true"><path d="M12 1l10 5v12l-10 5-10-5V6zM2 6l10 5 10-5M6 13l6 4 6-4M6 9v8M18 9v8" fill="none" stroke="#fff" stroke-width="2" /></svg>
				SMART FEASIBILITY CALCULATOR
			</div>
		</aside>
	</div>

	<footer>
		<button aria-label="Add sheet" class="foot-btn">{@render icon('plus')}</button>
		<button aria-label="All sheets" class="foot-btn">{@render icon('menu')}</button>
		<div class="sheets">
			{#each sheets as [name, color], i}
				<button class:current={i === 4} style="border-color: {color}">{name}{@render caret()}</button>
			{/each}
		</div>
		<button aria-label="Show side panel" class="side-toggle">{@render icon('left')}</button>
	</footer>
</div>

<style>
:global(body) {
	margin: 0;
	background: #fff;
}

.page {
	display: flex;
	flex-direction: column;
	min-height: 100vh;
	overflow: hidden;
	font: 5px/6px Roboto, sans-serif;
	color: #333;
}

.page * {
	box-sizing: border-box;
}

button, input, select {
	appearance: none;
	border: 0;
	margin: 0;
	padding: 0;
	background: none;
	font: inherit;
	color: inherit;
	outline: 0;
}

button {
	display: flex;
	align-items: center;
	justify-content: center;
	flex: none;
}

a {
	color: inherit;
	text-decoration: none;
}

.icon {
	display: block;
	flex: none;
	fill: currentColor;
}

.s5 { width: 5px; height: 5px; }
.s6 { width: 6px; height: 6px; }
.s8 { width: 8px; height: 8px; }

.caret {
	flex: none;
	width: 3px;
	height: 2px;
	fill: #666;
}

.rule {
	flex: none;
	width: 1px;
	height: 6px;
	background: #d0d3d6;
}

/* browser */
.tabstrip {
	display: flex;
	align-items: center;
	height: 14px;
	padding: 0 2px 0 27px;
	background: #f3f1f2;
}

.browser-tab {
	display: flex;
	align-items: center;
	gap: 2px;
	width: 78px;
	height: 12px;
	margin-top: 2px;
	padding: 0 3px;
	border-radius: 4px 4px 0 0;
	background: #fff;
}

.browser-tab span {
	flex: 1;
	font-size: 4px;
	white-space: nowrap;
	overflow: hidden;
	mask-image: linear-gradient(90deg, #000 80%, transparent);
}

.new-tab {
	margin-left: 3px;
}

.tab-search {
	width: 9px;
	height: 9px;
	margin-left: auto;
	border-radius: 3px;
	background: #fff;
}

.urlbar {
	display: flex;
	align-items: center;
	height: 14px;
	padding-right: 4px;
}

.nav {
	display: flex;
	gap: 6px;
	width: 52px;
	padding-left: 4px;
	color: #a0a3a6;
}

.address {
	display: flex;
	align-items: center;
	flex: 1;
	height: 11px;
	padding: 0 5px 0 2px;
	border-radius: 6px;
	background: #ececec;
}

.site {
	padding: 1px;
	border-radius: 4px;
	background: #fff;
}

.address input {
	flex: 1;
	margin-left: 2px;
}

.extensions {
	display: flex;
	align-items: center;
	flex: none;
	gap: 6px;
	padding-left: 6px;
}

.face {
	flex: none;
	width: 11px;
	height: 11px;
	border-radius: 50%;
	background: radial-gradient(circle at 50% 35%, #c99f86 0 2px, transparent 2px), linear-gradient(90deg, #123a63, #0e1d2e);
}

.face.small {
	width: 7px;
	height: 7px;
}

.bookmarks {
	display: flex;
	align-items: center;
	gap: 5px;
	height: 13px;
	padding: 1px 4px 0;
	border-bottom: 1px solid #e3e5e8;
	font-size: 4px;
	color: #85888b;
	white-space: nowrap;
}

.bookmarks a {
	display: flex;
	align-items: center;
	gap: 2px;
}

.more {
	margin-left: auto;
}

.bookmarks .all {
	color: #333;
}

/* docs header */
header {
	display: flex;
	height: 20px;
	padding: 3px 6px 0 7px;
	background: #f9fbfd;
}

.doc-logo {
	width: 9px;
	height: 12px;
	margin-top: 2px;
}

.doc {
	margin-left: 4px;
}

.doc-title {
	display: flex;
	align-items: center;
	gap: 5px;
	height: 7px;
}

h1 {
	margin: 0 4px 0 0;
	font: 6px/7px Roboto, sans-serif;
	color: #1f1f1f;
}

.menus {
	display: flex;
	gap: 5px;
	margin-top: 2px;
}

.actions {
	display: flex;
	align-items: center;
	gap: 8px;
	height: 13px;
	margin-top: 1px;
	margin-left: auto;
}

.call {
	gap: 3px;
}

.share {
	display: flex;
	height: 13px;
	margin-right: -3px;
	border-radius: 7px;
	overflow: hidden;
	background: #c2e7ff;
	font-weight: 700;
}

.share button {
	gap: 3px;
	padding: 0 4px 0 6px;
}

.share .share-more {
	padding: 0 4px;
	border-left: 1px solid #f9fbfd;
}

.workspace {
	display: flex;
	flex: 1;
	background: #f9fbfd;
}

main {
	display: flex;
	flex-direction: column;
	flex: 1;
	min-width: 0;
}

.toolbar {
	display: flex;
	align-items: center;
	height: 13px;
	margin: 2px 1px 0 5px;
	padding: 0 0 1px 2px;
	border-radius: 7px;
	background: #edf2fa;
}

.toolbar button {
	gap: 3px;
}

.toolbar .menus-search {
	gap: 4px;
	width: 34px;
	height: 10px;
	margin-right: 1px;
	border-radius: 5px;
	background: #fff;
}

.drop {
	display: flex;
	align-items: center;
	justify-content: space-between;
}

.drop.zoom {
	width: 20px;
	margin: 0 5px 0 2px;
}

.drop.font {
	width: 25px;
	margin: 0 6px 0 7px;
}

.toolbar .num {
	width: 11px;
}

.toolbar .tiny {
	font-size: 4px;
}

.step {
	width: 9px;
}

.size {
	width: 11px;
	height: 8px;
	border: 1px solid #8a8d91;
	border-radius: 1px;
	text-align: center;
}

.step + button {
	margin-left: 2px;
}

.toolbar .collapse {
	margin: 0 5px 0 auto;
}

.formula {
	display: flex;
	align-items: center;
	height: 11px;
	padding: 3px 0 0 5px;
	background: #fff;
	border-bottom: 1px solid #e0e2e5;
	font-size: 4px;
}

.name-box {
	width: 23px;
}

.formula .rule {
	margin: 0 4px;
}

.formula i {
	font: italic 5px/6px "Liberation Serif", serif;
	color: #777;
}

.fx {
	flex: 1;
}

/* grid */
.sheet {
	display: flex;
	flex: 1;
	background: #fff;
}

.scroller {
	display: flex;
	flex-direction: column;
	flex: 1;
	min-width: 0;
	overflow: hidden;
}

.col-group {
	display: flex;
	align-items: center;
	height: 10px;
	background: #f8f9fa;
}

.edge {
	width: 25px;
	height: 10px;
	border-right: 1px solid #b7b9bc;
}

.fold {
	width: 5px;
	height: 5px;
	border: 1px solid #a5a8ab;
	background: linear-gradient(#999, #999) center / 3px 1px no-repeat #fff;
}

.col-group .fold {
	margin-left: 276px;
}

.bracket {
	flex: 1;
	height: 1px;
	background: #c4c6c8;
}

table, thead, tbody {
	display: block;
}

/* rows keep their set height, so merged cells spill into the next one */
tr {
	display: grid;
	grid-template-columns: 9px 16px 7px 84px 17px 43px 20px 43px 17px 44px 7px 21px 2px repeat(21, 27px);
	grid-template-rows: minmax(0, 1fr);
	font: 5px/7px "Open Sans", "Noto Sans", sans-serif;
	color: #444;
	background: linear-gradient(#fff, #fff) 25px 0 no-repeat;
}

td, th {
	grid-row: 1;
	min-width: 0;
	padding: 0;
	font-weight: 400;
	white-space: nowrap;
}

td {
	display: flex;
	align-items: center;
	padding: 0 1px;
}

.letters {
	height: 9px;
	border-bottom: 1px solid #b5b7ba;
	font-size: 4px;
	line-height: 7px;
	color: #555;
	text-align: center;
}

.letters th {
	border-right: 1px solid #dadcdf;
	border-top: 1px solid #dadcdf;
	background: #fff;
}

.letters .corner, .gutter {
	grid-column: 1;
	border: 0;
	background: #f8f9fa;
}

.letters .freeze, .freeze {
	grid-column: 13;
	padding: 0;
	border: 0;
	background: #959ca2;
}

.rownum {
	display: flex;
	align-items: center;
	justify-content: center;
	grid-column: 2;
	border: solid #e0e2e4;
	border-width: 0 1px 1px;
	background: #fff;
	font-size: 4px;
	color: #555;
}

.letters .picked, .rownum.picked {
	background: #d3e3fd;
	color: #0b3f91;
}

.gutter {
	padding: 0 0 0 2px;
}

.gutter.mid {
	background: linear-gradient(#b5b7ba, #b5b7ba) 4px 0 / 1px 100% no-repeat #f8f9fa;
}

.gutter.end {
	background: linear-gradient(#b5b7ba, #b5b7ba) 4px 0 / 1px 4px no-repeat, linear-gradient(#b5b7ba, #b5b7ba) 4px 4px / 3px 1px no-repeat #f8f9fa;
}

.navy {
	background: linear-gradient(#1f3543, #1f3543) 25px 0 no-repeat;
}

.royal {
	background: linear-gradient(#004b80, #004b80) 25px 0 no-repeat;
	color: #fff;
}

.frozen {
	border-bottom: 1px solid #b9bbbd;
}

.active {
	border: 1px solid #1a5fc4;
}

.brand, .emblem {
	z-index: 1;
	height: 22px;
}

.brand {
	height: 20px;
}

.wordmark {
	font: 14px/20px Lato, sans-serif;
	color: #fff;
}

.wordmark b {
	font-weight: 400;
	color: #1d7fd0;
}

.emblem {
	justify-content: flex-end;
	padding: 0;
}

.mark {
	width: 24px;
	height: 22px;
}

.pale { color: #c3cdd3; }
.ink { color: #222; }
.blue { color: #2f6fed; }
.orange { color: #f5881f; }
.teal { color: #2f6c98; }
.plum { color: #8b3fb0; }
.b { font-weight: 700; }
.c { justify-content: center; }
.r { justify-content: flex-end; }
.inset { padding-right: 3px; }
.far { padding-right: 3px; }
.sub { padding-left: 6px; }

.gold {
	font-size: 8px;
	color: #fbbc04;
}

.under a, .link a {
	text-decoration: underline;
}

.dim {
	font-style: italic;
	color: #a9a9a9;
}

.line { border-bottom: 1px solid #f0f0f0; }
.vline { border-left: 1px solid #f3f3f3; border-right: 1px solid #f3f3f3; }
.grey { background: #f7f7f7; }
.shade { background: #ececee; }
.yellow { background: #ffffc5; }

.head {
	border-top: 1px solid #c9e0f2;
	border-bottom: 1px solid #b7d6f3;
	background: #f0f8fe;
	color: #2f6c98;
}

.head.soft {
	border-color: #e3f0f9;
	color: #3c4a54;
	font-weight: 700;
}

.head.violet {
	border-color: #cfa3e6;
	background: #f6ecfc;
	color: #8b3fb0;
}

.merged {
	height: 16px;
}

.two {
	white-space: normal;
	text-align: center;
	line-height: 6px;
}

.tick {
	font: 8px/8px "DejaVu Sans", sans-serif;
	color: #1e9e3e;
}

td select {
	flex: 1;
	min-width: 0;
	height: 7px;
	padding-left: 4px;
}

td.pick.orange select, td.pick.pk select {
	padding-left: 0;
}

.pick.r select {
	padding-right: 4px;
	text-align: right;
}

.note {
	z-index: 1;
	justify-self: end;
	align-self: start;
	width: 2px;
	height: 2px;
	padding: 0;
	background: #e53935;
}

.buoy {
	justify-content: center;
}

.slot {
	border: solid #f0f0f0;
	border-width: 0 1px 1px 0;
}

.sky { background: #cfe9fd; }
.ice { background: #e2f1fe; }
.peach { background: #fde6c9; }
.mint { background: #d1eedd; }

.hbar {
	height: 4px;
	padding-left: 331px;
	border-top: 1px solid #eceef0;
	background: #fbfbfc;
}

.hbar span {
	display: block;
	width: 48px;
	height: 3px;
	border-radius: 2px;
	background: #d5d7da;
}

.vbar {
	width: 3px;
	padding-top: 93px;
	background: #f8f9fa;
}

.vbar span {
	display: block;
	height: 188px;
	background: #d9dbde;
}

/* side panel */
aside {
	display: flex;
	flex-direction: column;
	width: 100px;
	background: #fff;
	font: 4px/5px "DejaVu Sans", sans-serif;
	color: #222;
}

.side-head {
	display: flex;
	align-items: center;
	justify-content: space-between;
	height: 12px;
	padding: 0 3px 0 4px;
	background: #54585b;
	color: #fff;
	font: 700 5px/6px Roboto, sans-serif;
	white-space: nowrap;
}

.logo {
	display: grid;
	grid-template-columns: auto 15px;
	grid-template-rows: 4px 12px 5px;
	justify-content: start;
	column-gap: 2px;
	height: 30px;
	padding: 6px 7px 0;
}

.logo strong {
	grid-area: 2 / 1;
	font: 700 14px/12px "Open Sans", sans-serif;
	color: #00508c;
}

.logo svg {
	grid-area: 2 / 2;
	width: 15px;
	height: 14px;
}

.tag {
	grid-area: 1 / 1;
	padding-left: 7px;
	font: 700 4px/4px "Open Sans", sans-serif;
	color: #4aa3d8;
}

.tag.low {
	grid-area: 3 / 1 / auto / span 2;
	padding-left: 39px;
	line-height: 5px;
	color: #2f7fc0;
}

.tag em {
	font-style: normal;
	color: #f4b731;
}

p {
	margin: 0 8px;
	color: #777;
	text-align: center;
}

h2 {
	display: flex;
	align-items: center;
	gap: 5px;
	height: 15px;
	margin: 6px 0 0;
	padding-left: 8px;
	font: 700 5px/7px "DejaVu Sans", sans-serif;
	color: #111;
}

h2 svg {
	width: 9px;
	height: 9px;
}

.options {
	display: flex;
	flex-direction: column;
	padding: 4px 7px 0 8px;
	border: solid #e6e8ea;
	border-width: 1px 0;
}

.options label {
	display: flex;
	justify-content: space-between;
	align-items: center;
	height: 13px;
	font-weight: 700;
}

.options span + label {
	margin-top: 8px;
}

.options input {
	width: 11px;
	height: 6px;
	border-radius: 3px;
	background: radial-gradient(circle at 3px 3px, #fff 0 2px, transparent 2px) #d6d8da;
}

.save {
	height: 15px;
	margin: 10px 7px 0;
	border-radius: 1px;
	background: #004b80;
	color: #fff;
	font: 700 5px/7px "DejaVu Sans", sans-serif;
}

.side-foot {
	display: flex;
	align-items: center;
	gap: 3px;
	height: 17px;
	margin: auto 0 1px;
	padding-left: 5px;
	background: #004b80;
	color: #fff;
	font: 5px/7px "Open Sans", sans-serif;
	white-space: nowrap;
}

.side-foot svg {
	width: 9px;
	height: 9px;
}

/* sheet tabs */
footer {
	display: flex;
	align-items: stretch;
	height: 12px;
	padding-left: 14px;
	background: #f9fbfd;
	color: #444;
}

.foot-btn {
	width: 13px;
}

.sheets {
	display: flex;
	flex: 1;
	margin-left: 4px;
	overflow: hidden;
}

.sheets button {
	gap: 4px;
	padding: 0 4px 0 5px;
	border-bottom: 1px solid;
	white-space: nowrap;
}

.sheets .current {
	background: #e1e9f7;
	border-bottom-style: dotted;
	color: #1a5fd0;
	font-weight: 700;
}

.side-toggle {
	width: 20px;
	margin-right: 6px;
}
</style>
